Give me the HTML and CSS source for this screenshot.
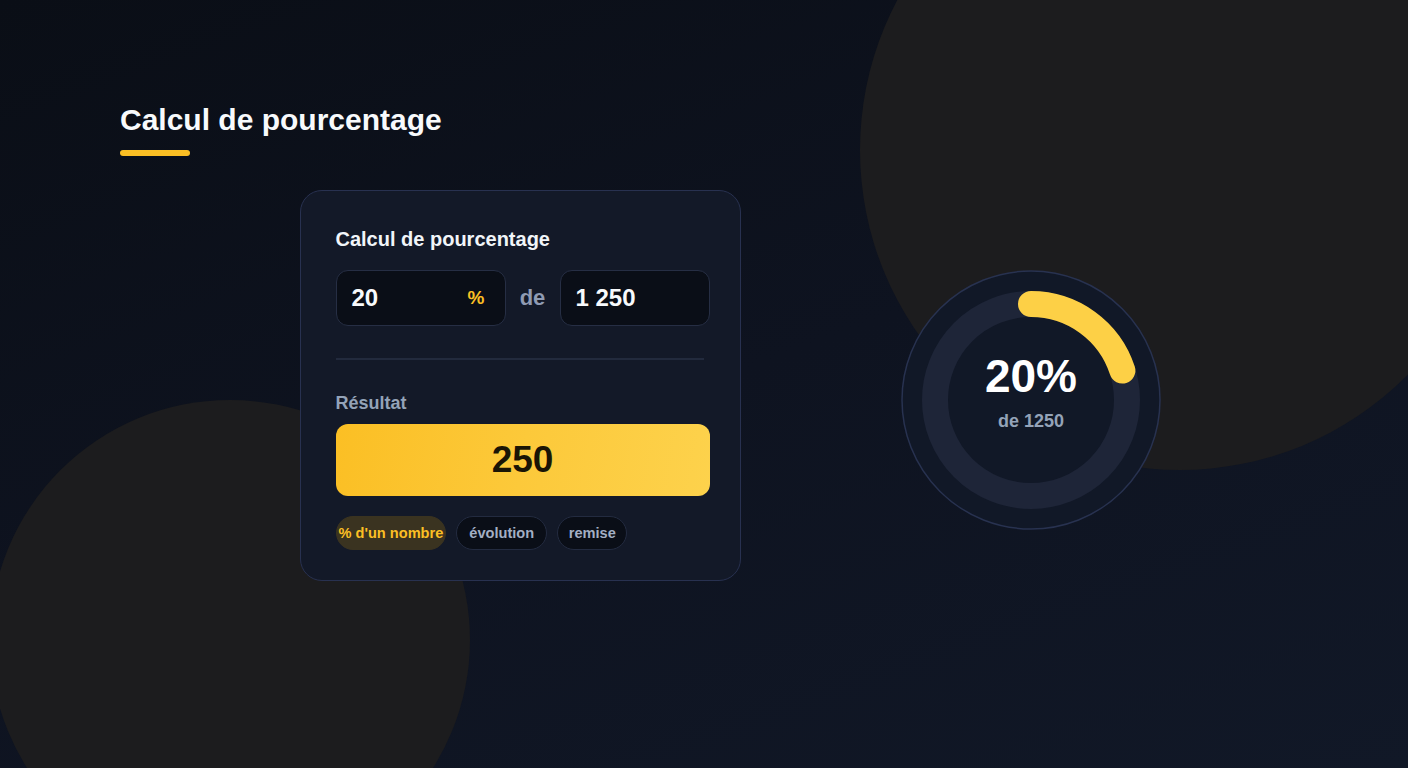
FILE: index.html
```html
<!DOCTYPE html>
<html lang="fr">
<head>
<meta charset="utf-8">
<title>Calcul de pourcentage</title>
<link rel="stylesheet" href="styles.css">
</head>
<body>
<div class="backdrop">
  <div class="blob blob-tr"></div>
  <div class="blob blob-bl"></div>
</div>
<main class="page">
  <h1 class="page-title">Calcul de pourcentage</h1>
  <div class="title-bar"></div>
  <div class="content">
    <section class="card">
      <h2 class="card-title">Calcul de pourcentage</h2>
      <div class="inputs">
        <div class="field field-pct"><span class="val">20</span><span class="unit">%</span></div>
        <span class="de">de</span>
        <div class="field field-num"><span class="val">1 250</span></div>
      </div>
      <div class="divider"></div>
      <div class="res-label">Résultat</div>
      <div class="result">250</div>
      <div class="chips">
        <span class="chip chip-active">% d'un nombre</span>
        <span class="chip">évolution</span>
        <span class="chip chip-narrow">remise</span>
      </div>
    </section>
    <div class="ring">
      <svg class="ring-svg" width="260" height="260" viewBox="0 0 260 260">
        <circle cx="130" cy="130" r="129" fill="#111827" stroke="#283250" stroke-width="1.5"/>
        <circle cx="130" cy="130" r="96" fill="none" stroke="#1e2538" stroke-width="26"/>
        <circle cx="130" cy="130" r="96" fill="none" stroke="#fdd046" stroke-width="26" stroke-linecap="round" stroke-dasharray="120.6 603.2" transform="rotate(-90 130 130)"/>
      </svg>
      <div class="ring-text">
        <div class="ring-pct">20%</div>
        <div class="ring-sub">de 1250</div>
      </div>
    </div>
  </div>
</main>
</body>
</html>
```
FILE: styles.css
```css
* { box-sizing: border-box; }
html, body { margin: 0; height: 100%; }
body {
  font-family: "Liberation Sans", Arial, sans-serif;
  background: linear-gradient(160deg, #0a0e16 0%, #0e1320 50%, #111827 100%);
  color: #f8fafc;
  overflow: hidden;
  position: relative;
}
.backdrop {
  position: absolute;
  inset: 0;
  overflow: hidden;
  z-index: 0;
}
.blob {
  position: absolute;
  border-radius: 50%;
  background: #1c1c1e;
}
.blob-tr { width: 640px; height: 640px; left: 860px; top: -170px; }
.blob-bl { width: 480px; height: 480px; left: -10px; top: 400px; }
.page {
  position: relative;
  z-index: 1;
  padding: 102px 0 0 120px;
}
.page-title {
  margin: 0;
  font-size: 30px;
  line-height: 36px;
  font-weight: 700;
  color: #f8fafc;
}
.title-bar {
  width: 70px;
  height: 6px;
  border-radius: 3px;
  background: #fbbf24;
  margin-top: 12px;
}
.content {
  display: flex;
  align-items: flex-start;
  gap: 160px;
  margin-top: 34px;
  margin-left: 180px;
}
.card {
  width: 441px;
  height: 391px;
  background: #131928;
  border: 1.5px solid #283150;
  border-radius: 22px;
  padding: 36px 28.5px 0 34.5px;
}
.card-title {
  margin: 0;
  font-size: 20px;
  line-height: 24px;
  font-weight: 700;
  color: #f1f5f9;
}
.inputs {
  display: flex;
  align-items: center;
  margin-top: 18.5px;
  height: 56px;
}
.field {
  height: 56px;
  background: #0a0e17;
  border: 1.5px solid #262e44;
  border-radius: 12px;
  display: flex;
  align-items: center;
  padding: 0 20px 0 15px;
}
.field-pct { width: 170px; justify-content: space-between; }
.field-num { width: 150px; }
.val { font-size: 24px; font-weight: 700; color: #f8fafc; }
.unit { font-size: 19px; font-weight: 700; color: #fbbf24; }
.de {
  width: 54px;
  text-align: center;
  font-size: 22px;
  font-weight: 700;
  color: #8f9bb3;
}
.divider {
  width: 368px;
  height: 2px;
  background: #222a3d;
  margin-top: 32px;
}
.res-label {
  margin-top: 32px;
  font-size: 18px;
  line-height: 22px;
  font-weight: 700;
  color: #94a3b8;
}
.result {
  margin-top: 10px;
  width: 374px;
  height: 72px;
  border-radius: 12px;
  background: linear-gradient(100deg, #fbbf24 0%, #fcc93a 50%, #fdd24c 100%);
  display: flex;
  align-items: center;
  justify-content: center;
  font-size: 37px;
  font-weight: 700;
  color: #1a1505;
}
.chips {
  display: flex;
  gap: 10px;
  margin-top: 20.5px;
}
.chip {
  height: 34px;
  border-radius: 17px;
  display: flex;
  align-items: center;
  padding: 0 12px;
  font-size: 14.6px;
  font-weight: 700;
  color: #a3afc4;
  background: #0a0e17;
  border: 1px solid #232b40;
}
.chip-narrow { padding: 0 10.5px; }
.chip-active {
  padding: 0 2px;
  color: #fbbf24;
  background: #3a3320;
  border-color: #3a3320;
  white-space: nowrap;
}
.ring {
  position: relative;
  width: 260px;
  height: 260px;
  margin-top: 80px;
}
.ring-svg { display: block; }
.ring-text {
  position: absolute;
  inset: 0;
  display: flex;
  flex-direction: column;
  align-items: center;
  justify-content: center;
  padding-bottom: 18px;
}
.ring-pct {
  font-size: 46px;
  line-height: 50px;
  font-weight: 700;
  color: #ffffff;
}
.ring-sub {
  margin-top: 10px;
  font-size: 18px;
  line-height: 20px;
  font-weight: 700;
  color: #94a3b8;
}
```
